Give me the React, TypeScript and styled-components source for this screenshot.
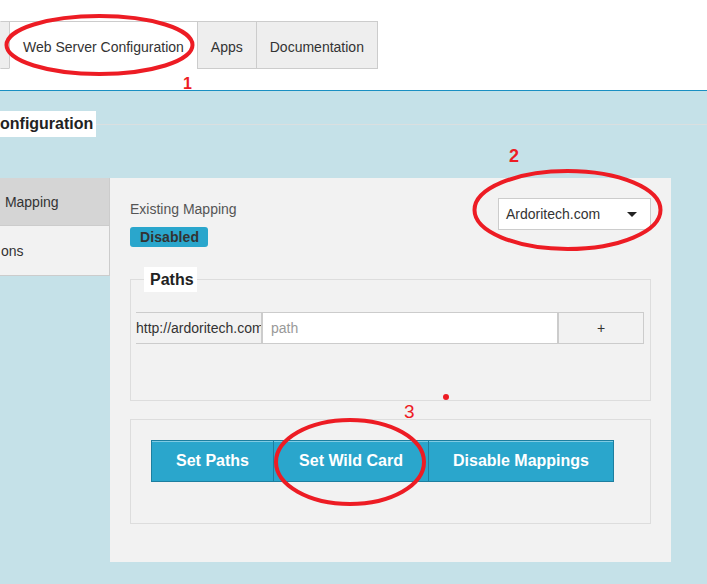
import styled, { createGlobalStyle } from "styled-components";

const Global = createGlobalStyle`
  html, body {
    margin: 0;
    padding: 0;
    background: #ffffff;
    font-family: "Liberation Sans", Arial, sans-serif;
    color: #333333;
  }
  #root {
    position: relative;
    width: 707px;
    height: 584px;
    overflow: hidden;
  }
`;

const Page = styled.div`
  display: flex;
  flex-direction: column;
  height: 584px;
`;

const Header = styled.div`
  height: 90px;
  padding-top: 21px;
  box-sizing: border-box;
  display: flex;
  align-items: flex-start;
`;

const Tab = styled.div<{ $active?: boolean; $stub?: boolean }>`
  height: 48px;
  box-sizing: border-box;
  display: flex;
  align-items: center;
  padding: ${(p) => (p.$stub ? "0" : "4px 13px 0 13px")};
  width: ${(p) => (p.$stub ? "10px" : "auto")};
  margin-left: -1px;
  font-size: 14px;
  color: #333333;
  background: ${(p) => (p.$active ? "#ffffff" : "#eeeeee")};
  border: 1px solid #cccccc;
  border-left-color: ${(p) => (p.$stub ? "transparent" : "#cccccc")};
  border-bottom-color: ${(p) => (p.$active ? "#ffffff" : "#cccccc")};
  white-space: nowrap;
  &:first-child {
    margin-left: 0;
  }
`;

const Content = styled.div`
  flex: 1;
  background: #c5e1e8;
  border-top: 1px solid #1a8fc2;
  padding-top: 20px;
`;

const SectionTitle = styled.div`
  display: flex;
  align-items: center;
`;

const SectionLabel = styled.div`
  background: #ffffff;
  height: 26px;
  line-height: 26px;
  padding-right: 3px;
  font-size: 16px;
  font-weight: bold;
  color: #222222;
`;

const SectionRule = styled.div`
  flex: 1;
  height: 1px;
  margin-top: 1px;
  background: #dadfe0;
`;

const Body = styled.div`
  display: flex;
  align-items: flex-start;
  margin-top: 41px;
`;

const Sidebar = styled.div`
  width: 110px;
  display: flex;
  flex-direction: column;
`;

const SideItem = styled.div<{ $active?: boolean }>`
  height: 48px;
  box-sizing: border-box;
  display: flex;
  align-items: center;
  padding-left: 1px;
  font-size: 14px;
  color: #333333;
  background: ${(p) => (p.$active ? "#d5d5d5" : "#f2f2f2")};
  border-bottom: 1px solid #cccccc;
  border-right: 1px solid #cccccc;
  white-space: pre;
  &:last-child {
    height: 50px;
  }
`;

const Panel = styled.div`
  width: 561px;
  height: 384px;
  box-sizing: border-box;
  background: #f2f2f2;
  padding: 20px 20px 0 20px;
  display: flex;
  flex-direction: column;
`;

const PanelHead = styled.div`
  display: flex;
  justify-content: space-between;
  align-items: flex-start;
  height: 49px;
`;

const Existing = styled.div`
  display: flex;
  flex-direction: column;
  align-items: flex-start;
`;

const ExistingLabel = styled.div`
  margin-top: 1px;
  font-size: 14px;
  line-height: 20px;
  color: #555555;
`;

const Badge = styled.span`
  margin-top: 8px;
  height: 20px;
  line-height: 20px;
  padding: 0 9px 0 10px;
  border-radius: 3px;
  background: #2aa6cc;
  font-size: 14px;
  font-weight: bold;
  letter-spacing: 0.1px;
  color: #333333;
`;

const Select = styled.div`
  width: 153px;
  height: 32px;
  box-sizing: border-box;
  display: flex;
  align-items: center;
  justify-content: space-between;
  padding: 0 13px 0 7px;
  background: #ffffff;
  border: 1px solid #cccccc;
  font-size: 14px;
  color: #333333;
`;

const Caret = styled.span`
  width: 0;
  height: 0;
  border-left: 5px solid transparent;
  border-right: 5px solid transparent;
  border-top: 5px solid #222222;
`;

const Fieldset = styled.fieldset<{ $pad: string; $top: number }>`
  margin: ${(p) => p.$top}px 0 0 0;
  border: 1px solid #dddddd;
  padding: ${(p) => p.$pad};
  min-width: 0;
`;

const Legend = styled.legend`
  margin-left: 8px;
  padding: 0 3px 0 6px;
  height: 25px;
  line-height: 25px;
  background: #ffffff;
  font-size: 16px;
  font-weight: bold;
  color: #222222;
`;

const InputGroup = styled.div`
  display: flex;
  height: 32px;
`;

const Addon = styled.div`
  width: 127px;
  box-sizing: border-box;
  overflow: hidden;
  white-space: nowrap;
  display: flex;
  align-items: center;
  font-size: 14px;
  color: #333333;
  border-top: 1px solid #cccccc;
  border-bottom: 1px solid #cccccc;
  border-right: 2px solid #cccccc;
`;

const PathInput = styled.input`
  width: 296px;
  box-sizing: border-box;
  height: 32px;
  margin: 0;
  padding: 0 8px;
  border: 1px solid #cccccc;
  border-left: none;
  border-right: 2px solid #cccccc;
  outline: none;
  font-family: "Liberation Sans", Arial, sans-serif;
  font-size: 14px;
  background: #ffffff;
  &::placeholder {
    color: #999999;
  }
`;

const AddButton = styled.button`
  width: 85px;
  height: 32px;
  margin: 0;
  box-sizing: border-box;
  background: #f2f2f2;
  border: 1px solid #cccccc;
  border-left: none;
  font-family: "Liberation Sans", Arial, sans-serif;
  font-size: 14px;
  color: #333333;
`;

const ButtonRow = styled.div`
  display: flex;
`;

const ActionButton = styled.button<{ $w: number }>`
  width: ${(p) => p.$w}px;
  height: 42px;
  margin: 0 0 0 -1px;
  box-sizing: border-box;
  background: #2aa6cc;
  border: 1px solid #1d7fa0;
  box-shadow: inset 0 1px 0 #7fcbe3;
  font-family: "Liberation Sans", Arial, sans-serif;
  font-size: 16px;
  font-weight: bold;
  color: #ffffff;
  &:first-child {
    margin-left: 0;
  }
`;

const Marks = styled.svg`
  position: absolute;
  left: 0;
  top: 0;
  pointer-events: none;
`;

const RED = "#ed1c24";

export default function App() {
  return (
    <>
      <Global />
      <Page>
        <Header>
          <Tab $stub />
          <Tab $active>Web Server Configuration</Tab>
          <Tab>Apps</Tab>
          <Tab>Documentation</Tab>
        </Header>
        <Content>
          <SectionTitle>
            <SectionLabel>onfiguration</SectionLabel>
            <SectionRule />
          </SectionTitle>
          <Body>
            <Sidebar>
              <SideItem $active> Mapping</SideItem>
              <SideItem>ons</SideItem>
            </Sidebar>
            <Panel>
              <PanelHead>
                <Existing>
                  <ExistingLabel>Existing Mapping</ExistingLabel>
                  <Badge>Disabled</Badge>
                </Existing>
                <Select>
                  Ardoritech.com
                  <Caret />
                </Select>
              </PanelHead>
              <Fieldset $top={20} $pad="20px 6px 56px 5px">
                <Legend>Paths</Legend>
                <InputGroup>
                  <Addon>http://ardoritech.com</Addon>
                  <PathInput placeholder="path" />
                  <AddButton>+</AddButton>
                </InputGroup>
              </Fieldset>
              <Fieldset $top={18} $pad="20px 20px 41px 20px">
                <ButtonRow>
                  <ActionButton $w={123}>Set Paths</ActionButton>
                  <ActionButton $w={156}>Set Wild Card</ActionButton>
                  <ActionButton $w={186}>Disable Mappings</ActionButton>
                </ButtonRow>
              </Fieldset>
            </Panel>
          </Body>
        </Content>
      </Page>
      <Marks width="707" height="584" viewBox="0 0 707 584">
        <g fill="none" stroke={RED} strokeWidth="4">
          <ellipse cx="99.5" cy="45" rx="93" ry="29" />
          <ellipse cx="567.5" cy="210" rx="93" ry="39" />
          <ellipse cx="350" cy="462" rx="74" ry="42" />
        </g>
        <circle cx="446" cy="397" r="3" fill={RED} />
        <g fill={RED} fontFamily="'Liberation Sans', Arial, sans-serif">
          <text x="183" y="89" fontSize="16" fontWeight="bold">1</text>
          <text x="509" y="162" fontSize="18" fontWeight="bold">2</text>
          <text x="404" y="418" fontSize="19">3</text>
        </g>
      </Marks>
    </>
  );
}
